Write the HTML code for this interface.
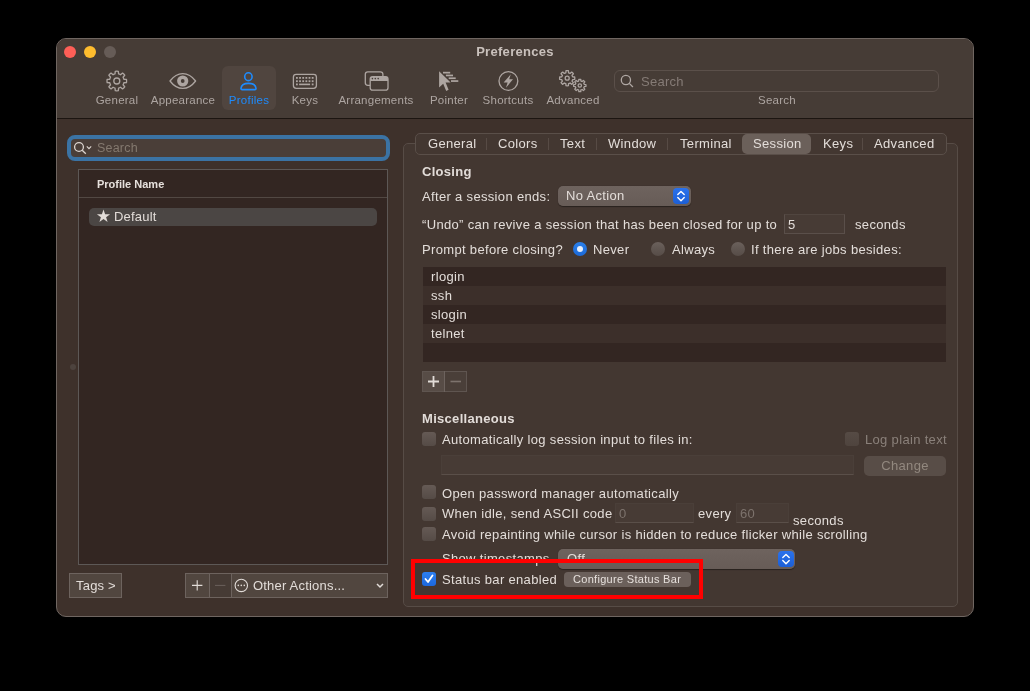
<!DOCTYPE html>
<html><head><meta charset="utf-8">
<style>
*{box-sizing:border-box;margin:0;padding:0}
html,body{width:1030px;height:691px;background:#000;overflow:hidden}
body{position:relative;font-family:"Liberation Sans",sans-serif;color:#e3ddd9;font-size:13px;line-height:1}
.a{position:absolute;white-space:nowrap}
#win{position:absolute;left:56px;top:38px;width:918px;height:579px;border-radius:10px;background:#3e312b;border:1px solid #6f6661;overflow:hidden}
#tb{position:absolute;left:0;top:0;width:100%;height:80px;background:#463c36;border-bottom:1px solid #1c1511}
.dot{position:absolute;top:7px;width:12px;height:12px;border-radius:50%}
.tl{font-size:11.5px;color:#ada5a1;letter-spacing:0.25px;text-align:center}
.t{font-size:13px;letter-spacing:0.33px}
.cb{position:absolute;width:14px;height:14px;border-radius:3px;background:linear-gradient(#655a55,#554b46)}
.radio{position:absolute;width:14px;height:14px;border-radius:50%;background:linear-gradient(#6a605b,#564c47)}
.fld{position:absolute;background:#473b35;border:1px solid #5a4f4a;border-top-color:#50453f}
.popup{position:absolute;height:20px;border-radius:5px;background:linear-gradient(#6e635e,#675c57);box-shadow:0 0.5px 1px rgba(0,0,0,.4)}
.step{position:absolute;width:16px;height:16px;border-radius:4px;background:linear-gradient(#2a72ec,#1c5fd6)}
.sep{position:absolute;top:138px;width:1px;height:12px;background:#574b45}
.row{position:absolute;left:423px;width:523px;height:19px}
svg{position:absolute;overflow:visible}
.a{will-change:transform}</style></head><body>
<div id="win">
  <div id="tb">
    <div class="dot" style="left:7px;background:#fe5f57"></div>
    <div class="dot" style="left:27px;background:#febc2e"></div>
    <div class="dot" style="left:47px;background:#665c57"></div>
  </div>
</div>
<div class="a" style="left:56px;width:918px;top:45px;text-align:center;font-weight:bold;font-size:13px;letter-spacing:0.3px;color:#c9c1bc">Preferences</div>

<!-- toolbar items -->
<div class="a" style="left:222px;top:66px;width:54px;height:44px;border-radius:6px;background:#50453f"></div>
<div class="a tl" style="left:87px;width:60px;top:95px">General</div>
<div class="a tl" style="left:143px;width:80px;top:95px">Appearance</div>
<div class="a tl" style="left:219px;width:60px;top:95px;color:#1e8bfd">Profiles</div>
<div class="a tl" style="left:275px;width:60px;top:95px">Keys</div>
<div class="a tl" style="left:331px;width:90px;top:95px">Arrangements</div>
<div class="a tl" style="left:419px;width:60px;top:95px">Pointer</div>
<div class="a tl" style="left:473px;width:70px;top:95px">Shortcuts</div>
<div class="a tl" style="left:538px;width:70px;top:95px">Advanced</div>
<div class="a tl" style="left:747px;width:60px;top:95px">Search</div>
<div class="a" style="left:614px;top:70px;width:325px;height:22px;border-radius:6px;border:1px solid #5b504a;background:#463c36"></div>
<div class="a" style="left:641px;top:75px;font-size:13px;color:#857b76;letter-spacing:0.25px">Search</div>

<!-- left sidebar -->
<div class="a" style="left:67px;top:135px;width:323px;height:26px;border-radius:8px;border:4px solid #3b73a4;background:#4a3e38"></div>
<div class="a" style="left:97px;top:142px;font-size:12.5px;color:#84796f;letter-spacing:0.2px">Search</div>
<div class="a" style="left:78px;top:169px;width:310px;height:396px;background:#332622;border:1px solid #5d5856"></div>
<div class="a" style="left:79px;top:197px;width:308px;height:1px;background:#524843"></div>
<div class="a" style="left:97px;top:179px;font-size:11px;font-weight:bold;color:#e6e0dc">Profile Name</div>
<div class="a" style="left:89px;top:208px;width:288px;height:18px;border-radius:5px;background:#4b4644"></div>
<div class="a" style="left:114px;top:210px;font-size:13px;color:#e2dcd8;letter-spacing:0.2px">Default</div>
<div class="a" style="left:70px;top:364px;width:6px;height:6px;border-radius:50%;background:#4d433e"></div>

<div class="a" style="left:69px;top:573px;width:53px;height:25px;background:#51463f;border:1px solid #6d635e"></div>
<div class="a" style="left:76px;top:579px;font-size:13px;color:#e2dcd8;letter-spacing:0.2px">Tags &gt;</div>
<div class="a" style="left:185px;top:573px;width:203px;height:25px;border:1px solid #6d635e;background:#463b35"></div>
<div class="a" style="left:186px;top:574px;width:23px;height:23px;background:#51463f"></div>
<div class="a" style="left:209px;top:573px;width:1px;height:25px;background:#6d635e"></div>
<div class="a" style="left:231px;top:573px;width:1px;height:25px;background:#6d635e"></div>
<div class="a" style="left:232px;top:574px;width:155px;height:23px;background:#51463f"></div>
<div class="a" style="left:253px;top:579px;font-size:13px;color:#e2dcd8;letter-spacing:0.2px">Other Actions...</div>

<!-- tab view -->
<div class="a" style="left:403px;top:143px;width:555px;height:464px;border-radius:5px;background:#433731;border:1px solid #574c46"></div>
<div class="a" style="left:415px;top:133px;width:532px;height:22px;border-radius:5px;background:#433731;border:1px solid #5a4f49"></div>
<div class="a" style="left:742px;top:134px;width:69px;height:20px;border-radius:5px;background:#6b605a"></div>
<div class="sep" style="left:486px"></div>
<div class="sep" style="left:548px"></div>
<div class="sep" style="left:596px"></div>
<div class="sep" style="left:667px"></div>
<div class="sep" style="left:862px"></div>
<div class="a t" style="left:428px;top:137px">General</div>
<div class="a t" style="left:498px;top:137px">Colors</div>
<div class="a t" style="left:560px;top:137px">Text</div>
<div class="a t" style="left:608px;top:137px">Window</div>
<div class="a t" style="left:680px;top:137px">Terminal</div>
<div class="a t" style="left:753px;top:137px">Session</div>
<div class="a t" style="left:823px;top:137px">Keys</div>
<div class="a t" style="left:874px;top:137px">Advanced</div>

<div class="a" style="left:422px;top:165px;font-weight:bold;font-size:13px;letter-spacing:0.3px;color:#e2dcd8">Closing</div>
<div class="a t" style="left:422px;top:190px">After a session ends:</div>
<div class="popup" style="left:558px;top:186px;width:133px"></div>
<div class="step" style="left:673px;top:188px"></div>
<div class="a t" style="left:566px;top:189px">No Action</div>

<div class="a t" style="left:422px;top:218px">“Undo” can revive a session that has been closed for up to</div>
<div class="fld" style="left:784px;top:214px;width:61px;height:20px"></div>
<div class="a t" style="left:788px;top:218px">5</div>
<div class="a t" style="left:855px;top:218px">seconds</div>

<div class="a t" style="left:422px;top:243px">Prompt before closing?</div>
<div class="radio" style="left:573px;top:242px;background:linear-gradient(#2b80ea,#1b69d8)"></div>
<div class="a" style="left:577px;top:246px;width:6px;height:6px;border-radius:50%;background:#e6eefa"></div>
<div class="a t" style="left:593px;top:243px">Never</div>
<div class="radio" style="left:651px;top:242px"></div>
<div class="a t" style="left:672px;top:243px">Always</div>
<div class="radio" style="left:731px;top:242px"></div>
<div class="a t" style="left:751px;top:243px">If there are jobs besides:</div>

<div class="row" style="top:267px;background:#332622"></div>
<div class="row" style="top:286px;background:#3c2f2a"></div>
<div class="row" style="top:305px;background:#332622"></div>
<div class="row" style="top:324px;background:#3c2f2a"></div>
<div class="row" style="top:343px;background:#332622"></div>
<div class="a t" style="left:431px;top:270px">rlogin</div>
<div class="a t" style="left:431px;top:289px">ssh</div>
<div class="a t" style="left:431px;top:308px">slogin</div>
<div class="a t" style="left:431px;top:327px">telnet</div>

<div class="a" style="left:422px;top:371px;width:45px;height:21px;border:1px solid #5f5550;background:#4a3f39"></div>
<div class="a" style="left:423px;top:372px;width:22px;height:19px;background:#574c46"></div>
<div class="a" style="left:444px;top:371px;width:1px;height:21px;background:#6d635e"></div>

<div class="a" style="left:422px;top:412px;font-weight:bold;font-size:13px;letter-spacing:0.3px;color:#e2dcd8">Miscellaneous</div>
<div class="cb" style="left:422px;top:432px"></div>
<div class="a t" style="left:442px;top:433px">Automatically log session input to files in:</div>
<div class="cb" style="left:845px;top:432px;background:linear-gradient(#564b45,#4f443e)"></div>
<div class="a t" style="left:865px;top:433px;color:#8a807a">Log plain text</div>
<div class="fld" style="left:441px;top:455px;width:413px;height:20px;background:#473b35;border-color:#4a3f39;border-bottom-color:#5a4f49"></div>
<div class="a" style="left:864px;top:456px;width:82px;height:20px;border-radius:5px;background:#584d47"></div>
<div class="a t" style="left:864px;width:82px;text-align:center;top:459px;color:#92887f">Change</div>

<div class="cb" style="left:422px;top:485px"></div>
<div class="a t" style="left:442px;top:487px">Open password manager automatically</div>
<div class="cb" style="left:422px;top:507px"></div>
<div class="a t" style="left:442px;top:507px">When idle, send ASCII code</div>
<div class="fld" style="left:615px;top:503px;width:79px;height:20px;background:#473b35;border-color:#4a3f39;border-bottom-color:#5a4f49"></div>
<div class="a t" style="left:619px;top:507px;color:#7d736d">0</div>
<div class="a t" style="left:698px;top:507px">every</div>
<div class="fld" style="left:736px;top:503px;width:53px;height:20px;background:#473b35;border-color:#4a3f39;border-bottom-color:#5a4f49"></div>
<div class="a t" style="left:740px;top:507px;color:#7d736d">60</div>
<div class="a t" style="left:793px;top:514px">seconds</div>
<div class="cb" style="left:422px;top:527px"></div>
<div class="a t" style="left:442px;top:528px">Avoid repainting while cursor is hidden to reduce flicker while scrolling</div>

<div class="a t" style="left:442px;top:552px">Show timestamps</div>
<div class="popup" style="left:558px;top:549px;width:237px"></div>
<div class="step" style="left:778px;top:551px"></div>
<div class="a t" style="left:567px;top:552px">Off</div>

<div class="cb" style="left:422px;top:572px;background:linear-gradient(#2d7ff0,#1c68de)"></div>
<div class="a t" style="left:442px;top:573px">Status bar enabled</div>
<div class="a" style="left:564px;top:572px;width:127px;height:15px;border-radius:4px;background:#6b605b"></div>
<div class="a" style="left:573px;top:574px;font-size:11px;letter-spacing:0.3px;color:#e6e0dc">Configure Status Bar</div>

<svg width="1030" height="691" viewBox="0 0 1030 691" style="left:0;top:0;pointer-events:none">
<g fill="none" stroke="#ada5a1" stroke-width="1.3" stroke-linejoin="round">
 <path d="M123.88 79.23L126.48 79.47A9.8 9.8 0 0 1 126.48 82.53L123.88 82.77A7.3 7.3 0 0 1 123.06 84.75L124.73 86.76A9.8 9.8 0 0 1 122.56 88.93L120.55 87.26A7.3 7.3 0 0 1 118.57 88.08L118.33 90.68A9.8 9.8 0 0 1 115.27 90.68L115.03 88.08A7.3 7.3 0 0 1 113.05 87.26L111.04 88.93A9.8 9.8 0 0 1 108.87 86.76L110.54 84.75A7.3 7.3 0 0 1 109.72 82.77L107.12 82.53A9.8 9.8 0 0 1 107.12 79.47L109.72 79.23A7.3 7.3 0 0 1 110.54 77.25L108.87 75.24A9.8 9.8 0 0 1 111.04 73.07L113.05 74.74A7.3 7.3 0 0 1 115.03 73.92L115.27 71.32A9.8 9.8 0 0 1 118.33 71.32L118.57 73.92A7.3 7.3 0 0 1 120.55 74.74L122.56 73.07A9.8 9.8 0 0 1 124.73 75.24L123.06 77.25A7.3 7.3 0 0 1 123.88 79.23Z"/><circle cx="116.8" cy="81" r="3"/>
 <path d="M170 81C174.2 75.4 178.2 73.6 182.8 73.6C187.4 73.6 191.4 75.4 195.6 81C191.4 86.6 187.4 88.4 182.8 88.4C178.2 88.4 174.2 86.6 170 81Z"/>
 <rect x="293.4" y="74.3" width="23" height="14" rx="2.8"/>
 <path d="M370.2 85.3H367.8Q365.3 85.3 365.3 82.8V74.3Q365.3 71.8 367.8 71.8H380.4Q382.9 71.8 382.9 74.3V76.6"/>
 <rect x="370.2" y="76.6" width="17.8" height="13.6" rx="2.5"/>
 <circle cx="508.4" cy="81" r="9.4"/>
 <path d="M572.63 76.84L574.71 77.01A7.6 7.6 0 0 1 574.71 79.39L572.63 79.56A5.6 5.6 0 0 1 572.00 81.08L573.35 82.67A7.6 7.6 0 0 1 571.67 84.35L570.08 83.00A5.6 5.6 0 0 1 568.56 83.63L568.39 85.71A7.6 7.6 0 0 1 566.01 85.71L565.84 83.63A5.6 5.6 0 0 1 564.32 83.00L562.73 84.35A7.6 7.6 0 0 1 561.05 82.67L562.40 81.08A5.6 5.6 0 0 1 561.77 79.56L559.69 79.39A7.6 7.6 0 0 1 559.69 77.01L561.77 76.84A5.6 5.6 0 0 1 562.40 75.32L561.05 73.73A7.6 7.6 0 0 1 562.73 72.05L564.32 73.40A5.6 5.6 0 0 1 565.84 72.77L566.01 70.69A7.6 7.6 0 0 1 568.39 70.69L568.56 72.77A5.6 5.6 0 0 1 570.08 73.40L571.67 72.05A7.6 7.6 0 0 1 573.35 73.73L572.00 75.32A5.6 5.6 0 0 1 572.63 76.84Z"/><circle cx="567.2" cy="78.2" r="2"/>
 <path d="M584.26 84.38L585.92 84.53A6.2 6.2 0 0 1 585.92 86.47L584.26 86.62A4.6 4.6 0 0 1 583.75 87.86L584.82 89.14A6.2 6.2 0 0 1 583.44 90.52L582.16 89.45A4.6 4.6 0 0 1 580.92 89.96L580.77 91.62A6.2 6.2 0 0 1 578.83 91.62L578.68 89.96A4.6 4.6 0 0 1 577.44 89.45L576.16 90.52A6.2 6.2 0 0 1 574.78 89.14L575.85 87.86A4.6 4.6 0 0 1 575.34 86.62L573.68 86.47A6.2 6.2 0 0 1 573.68 84.53L575.34 84.38A4.6 4.6 0 0 1 575.85 83.14L574.78 81.86A6.2 6.2 0 0 1 576.16 80.48L577.44 81.55A4.6 4.6 0 0 1 578.68 81.04L578.83 79.38A6.2 6.2 0 0 1 580.77 79.38L580.92 81.04A4.6 4.6 0 0 1 582.16 81.55L583.44 80.48A6.2 6.2 0 0 1 584.82 81.86L583.75 83.14A4.6 4.6 0 0 1 584.26 84.38Z"/><circle cx="579.8" cy="85.5" r="1.7"/>
</g>
<g fill="#ada5a1">
 <circle cx="182.7" cy="81" r="5.6"/>
</g>
<circle cx="182.7" cy="81" r="1.9" fill="#463c36"/>
<g fill="#ada5a1">
 <rect x="296.00" y="77.00" width="1.8" height="1.8"/><rect x="299.15" y="77.00" width="1.8" height="1.8"/><rect x="302.30" y="77.00" width="1.8" height="1.8"/><rect x="305.45" y="77.00" width="1.8" height="1.8"/><rect x="308.60" y="77.00" width="1.8" height="1.8"/><rect x="311.75" y="77.00" width="1.8" height="1.8"/><rect x="296.00" y="80.30" width="1.8" height="1.8"/><rect x="299.15" y="80.30" width="1.8" height="1.8"/><rect x="302.30" y="80.30" width="1.8" height="1.8"/><rect x="305.45" y="80.30" width="1.8" height="1.8"/><rect x="308.60" y="80.30" width="1.8" height="1.8"/><rect x="311.75" y="80.30" width="1.8" height="1.8"/><rect x="296.00" y="83.50" width="1.8" height="1.8"/><rect x="299.1" y="83.6" width="11" height="1.6"/><rect x="311.75" y="83.50" width="1.8" height="1.8"/>
 <path d="M370.2 81V79Q370.2 76.6 372.6 76.6H385.6Q388 76.6 388 79V81Z"/>
 <rect x="443" y="71.8" width="7.2" height="1.7"/><rect x="445.9" y="74.6" width="7.1" height="1.7"/><rect x="448.7" y="77.4" width="7" height="1.7"/><rect x="451" y="80.2" width="7.3" height="1.7"/>
 <path d="M439.1 71.2L450.6 82.4L445.6 82.6L448.6 89.8L446.2 91L443.2 83.8L439.1 87.4Z" stroke="#463c36" stroke-width="0.9" paint-order="stroke"/>
 <path d="M510.8 74.3L503.6 82.6H507.6L506 87.8L513 79.3H509.2Z"/>
</g>

<g fill="#463c36"><circle cx="372.4" cy="78.6" r="0.8"/><circle cx="375.3" cy="78.6" r="0.8"/><circle cx="378.2" cy="78.6" r="0.8"/></g>
<g fill="none" stroke="#1e8bfd" stroke-width="1.6">
 <ellipse cx="248.4" cy="76.7" rx="3.7" ry="3.9"/>
 <path d="M241 88.4Q241.4 83.4 248.5 83.4Q255.6 83.4 256 88.4Q256.1 89.6 254.9 89.6H242.1Q240.9 89.6 241 88.4Z" stroke-linejoin="round"/>
</g>
<g fill="none" stroke="#b0a8a4" stroke-width="1.3">
 <circle cx="625.9" cy="80" r="4.6"/><path d="M629.3 83.4L632.9 87"/>
</g>
<g fill="none" stroke="#dcd5d0" stroke-width="1.3">
 <circle cx="79" cy="147" r="4.4"/><path d="M82.2 150.2L85.8 153.8"/><path d="M86.8 146.4L89 148.6L91.2 146.4" stroke-width="1.1"/>
</g>
<path d="M103.5 209.5L105.1 214.3H110.1L106.1 217.2L107.6 222L103.5 219.1L99.4 222L100.9 217.2L96.9 214.3H101.9Z" fill="#e2dcd8"/>
<g stroke="#e2dcd8" stroke-width="1.4" fill="none">
 <path d="M197.2 580.2V590.6M192 585.4H202.4" stroke-width="1.1"/>
 <circle cx="241.3" cy="585.4" r="6.2" stroke-width="1.1"/>
 <path d="M377 584L380 587L383 584" stroke-width="1.5"/>
 <path d="M433.5 376V387M428 381.5H439" stroke-width="1.8"/>
</g>
<g fill="#e2dcd8"><circle cx="238.3" cy="585.4" r="0.8"/><circle cx="241.3" cy="585.4" r="0.8"/><circle cx="244.3" cy="585.4" r="0.8"/></g>
<g stroke="#6b615c" stroke-width="1.4"><path d="M215 585.4H225.4" stroke-width="1"/><path d="M450.5 381.5H461" stroke="#7d736d" stroke-width="1.6"/></g>
<g stroke="#fff" stroke-width="1.4" fill="none" stroke-linecap="round" stroke-linejoin="round">
 <path d="M677.8 194.6L681 191.4L684.2 194.6M677.8 197.6L681 200.8L684.2 197.6"/>
 <path d="M782.8 557.6L786 554.4L789.2 557.6M782.8 560.6L786 563.8L789.2 560.6"/>
 <path d="M425.5 579L428 582L432.5 575.5" stroke-width="1.8"/>
</g>
</svg>

<div class="a" style="left:411px;top:559px;width:292px;height:40px;border:4px solid #f00"></div>
</body></html>
